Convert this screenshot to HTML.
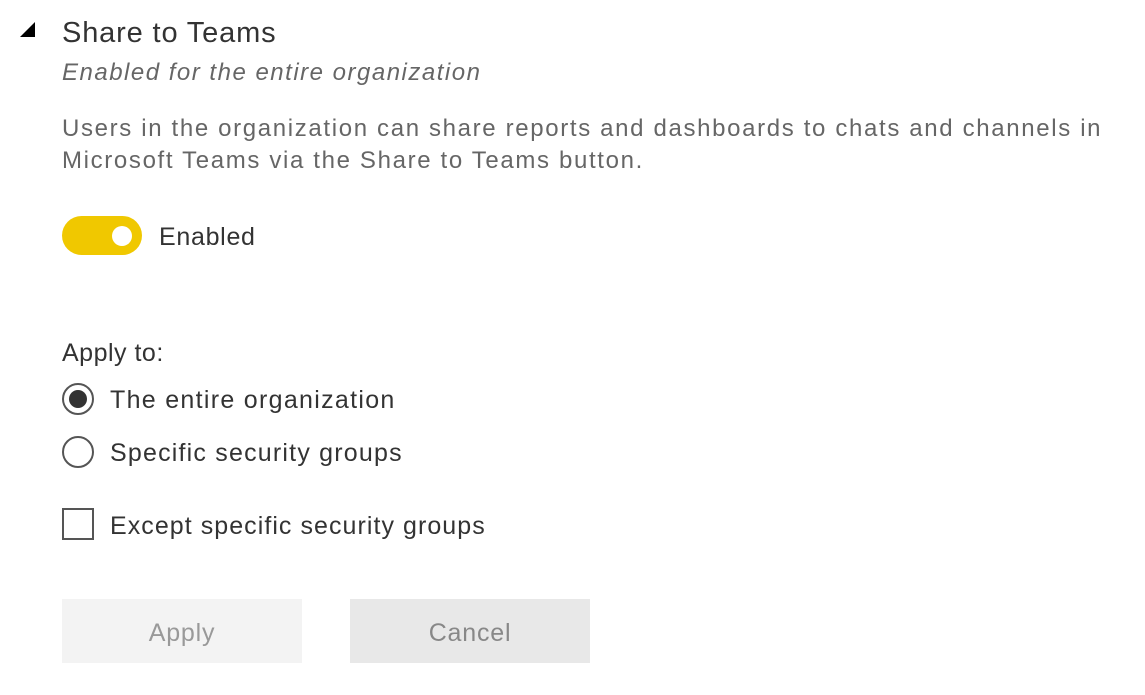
<!DOCTYPE html>
<html><head><style>
body{margin:0;width:1145px;height:695px;background:#fff;font-family:"Liberation Sans",sans-serif;position:relative;overflow:hidden;color:#333}
.a{position:absolute;white-space:nowrap}
</style></head><body>
<svg class="a" style="left:19px;top:21px" width="18" height="18"><polygon points="16,1 16,16 1,16" fill="#000"/></svg>
<div class="a" style="left:62px;top:17px;font-size:29px;color:#333;letter-spacing:0.85px">Share to Teams</div>
<div class="a" style="left:62px;top:59px;font-size:24px;font-style:italic;color:#666;letter-spacing:1.5px">Enabled for the entire organization</div>
<div class="a" style="left:62px;top:113px;font-size:24px;color:#666;line-height:32px;letter-spacing:1.65px">Users in the organization can share reports and dashboards to chats and channels in<br>Microsoft Teams via the Share to Teams button.</div>
<div class="a" style="left:62px;top:216px;width:80px;height:39px;border-radius:20px;background:#f0c800"></div>
<div class="a" style="left:112px;top:226px;width:20px;height:20px;border-radius:50%;background:#fff"></div>
<div class="a" style="left:159px;top:223px;font-size:25px;color:#333;letter-spacing:0.7px">Enabled</div>
<div class="a" style="left:62px;top:339px;font-size:25px;color:#333;letter-spacing:0.5px">Apply to:</div>
<div class="a" style="left:62px;top:383px;width:28px;height:28px;border:2px solid #555;border-radius:50%"></div>
<div class="a" style="left:69px;top:390px;width:18px;height:18px;border-radius:50%;background:#333"></div>
<div class="a" style="left:110px;top:386px;font-size:25px;color:#333;letter-spacing:1.3px">The entire organization</div>
<div class="a" style="left:62px;top:436px;width:28px;height:28px;border:2px solid #555;border-radius:50%"></div>
<div class="a" style="left:110px;top:439px;font-size:25px;color:#333;letter-spacing:1.2px">Specific security groups</div>
<div class="a" style="left:62px;top:508px;width:28px;height:28px;border:2px solid #555"></div>
<div class="a" style="left:110px;top:512px;font-size:25px;color:#333;letter-spacing:1.05px">Except specific security groups</div>
<div class="a" style="left:62px;top:599px;width:240px;height:64px;background:#f3f3f3;color:#999;font-size:25px;text-align:center;line-height:68px;letter-spacing:0.8px">Apply</div>
<div class="a" style="left:350px;top:599px;width:240px;height:64px;background:#e8e8e8;color:#888;font-size:25px;text-align:center;line-height:68px;letter-spacing:0.8px">Cancel</div>
</body></html>
